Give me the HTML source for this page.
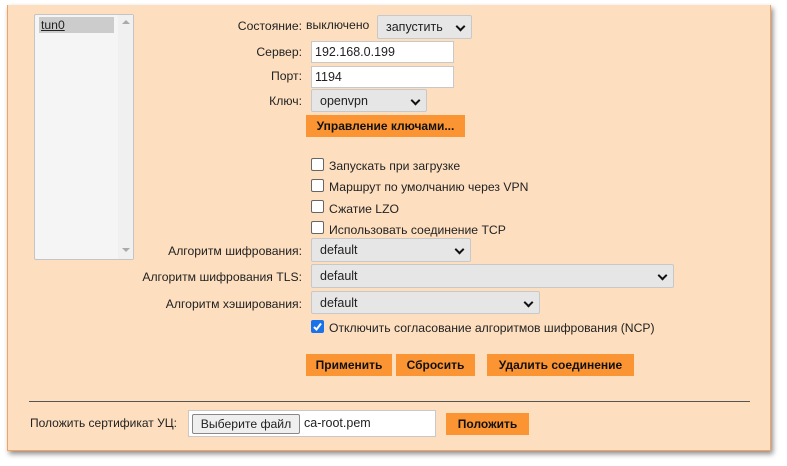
<!DOCTYPE html>
<html><head><meta charset="utf-8"><style>
*{box-sizing:border-box;margin:0;padding:0}
body{width:787px;height:466px;background:#fff;font-family:"Liberation Sans","DejaVu Sans",sans-serif;font-size:12.2px;color:#222;position:relative;overflow:hidden}
.p{position:absolute;left:7px;top:5px;width:764px;height:446px;background:#fddfc0;border:1px solid #f5a35c;border-top:none;box-shadow:2px 3px 5px rgba(0,0,0,.45)}
.a{position:absolute;white-space:nowrap}
.lb{right:485px;text-align:right}
.sel{position:absolute;background:#e6e6e6;border:1px solid #c8c8c8;border-radius:2px;padding-left:8px;font-size:12.5px}
.sel:after{content:"";position:absolute;right:7px;top:7px;width:5px;height:5px;border-right:2px solid #111;border-bottom:2px solid #111;transform:rotate(45deg)}
.inp{position:absolute;background:#fff;border:1px solid #c8c8c8;padding-left:3px;line-height:20px;font-size:12.5px}
.btn{position:absolute;background:#fb9433;font-weight:bold;font-size:12px;color:#111;text-align:center;line-height:22px}
.cb{position:absolute;left:311px;width:13px;height:13px;border:1px solid #666;border-radius:2px;background:#fff}
.ct{position:absolute;left:329px}
</style></head><body>
<div class="p"></div>
<div class="a" style="left:34px;top:14px;width:100px;height:246px;background:#f5f5f5;border:1px solid #c4c4c4;border-radius:2px"></div>
<div class="a" style="left:118px;top:15px;width:15px;height:244px;background:#f0f0f0"></div>
<div class="a" style="left:122px;top:20px;width:0;height:0;border-left:4px solid transparent;border-right:4px solid transparent;border-bottom:4px solid #aaa"></div>
<div class="a" style="left:122px;top:248px;width:0;height:0;border-left:4px solid transparent;border-right:4px solid transparent;border-top:4px solid #aaa"></div>
<div class="a" style="left:39px;top:17px;width:75px;height:16px;background:#ccc;padding-left:2px;line-height:16px;text-decoration:underline">tun0</div>

<div class="a lb" style="top:19px">Состояние:</div>
<div class="a" style="left:306px;top:18px">выключено</div>
<div class="sel" style="left:377px;top:15px;width:95px;height:24px;line-height:22px">запустить</div>
<div class="a lb" style="top:45px">Сервер:</div>
<div class="inp" style="left:311px;top:41px;width:143px;height:22px">192.168.0.199</div>
<div class="a lb" style="top:69px">Порт:</div>
<div class="inp" style="left:311px;top:66px;width:143px;height:22px">1194</div>
<div class="a lb" style="top:94px">Ключ:</div>
<div class="sel" style="left:311px;top:89px;width:116px;height:23px;line-height:22px">openvpn</div>
<div class="btn" style="left:306px;top:115px;width:159px;height:22px">Управление ключами...</div>

<div class="cb" style="top:158px"></div><div class="ct" style="top:159px">Запускать при загрузке</div>
<div class="cb" style="top:179px"></div><div class="ct" style="top:180px">Маршрут по умолчанию через VPN</div>
<div class="cb" style="top:200px"></div><div class="ct" style="top:202px">Сжатие LZO</div>
<div class="cb" style="top:221px"></div><div class="ct" style="top:223px">Использовать соединение TCP</div>

<div class="a lb" style="top:244px">Алгоритм шифрования:</div>
<div class="sel" style="left:311px;top:238px;width:160px;height:24px;line-height:23px">default</div>
<div class="a lb" style="top:270px">Алгоритм шифрования TLS:</div>
<div class="sel" style="left:311px;top:264px;width:363px;height:24px;line-height:23px">default</div>
<div class="a lb" style="top:297px">Алгоритм хэширования:</div>
<div class="sel" style="left:311px;top:291px;width:229px;height:23px;line-height:22px">default</div>
<div class="cb" style="top:320px;background:#1a73e8;border-color:#1a73e8"><svg width="11" height="11" style="position:absolute;left:0;top:0"><path d="M2 6 L4.5 8.5 L9 2.5" stroke="#fff" stroke-width="2" fill="none"/></svg></div>
<div class="ct" style="top:321px">Отключить согласование алгоритмов шифрования (NCP)</div>

<div class="btn" style="left:306px;top:354px;width:86px;height:22px">Применить</div>
<div class="btn" style="left:396px;top:354px;width:79px;height:22px">Сбросить</div>
<div class="btn" style="left:487px;top:354px;width:147px;height:22px">Удалить соединение</div>

<div class="a" style="left:29px;top:401px;width:721px;height:1px;background:#555"></div>
<div class="a" style="left:30px;top:416px;font-size:12px">Положить сертификат УЦ:</div>
<div class="a" style="left:188px;top:410px;width:248px;height:27px;background:#fff;border:1px solid #c8c8c8"></div>
<div class="a" style="left:192px;top:414px;width:108px;height:20px;background:#efefef;border:1px solid #888;border-radius:2px;text-align:center;line-height:18px">Выберите файл</div>
<div class="a" style="left:304px;top:416px;font-size:12.5px">ca-root.pem</div>
<div class="btn" style="left:446px;top:413px;width:83px;height:22px">Положить</div>
</body></html>
